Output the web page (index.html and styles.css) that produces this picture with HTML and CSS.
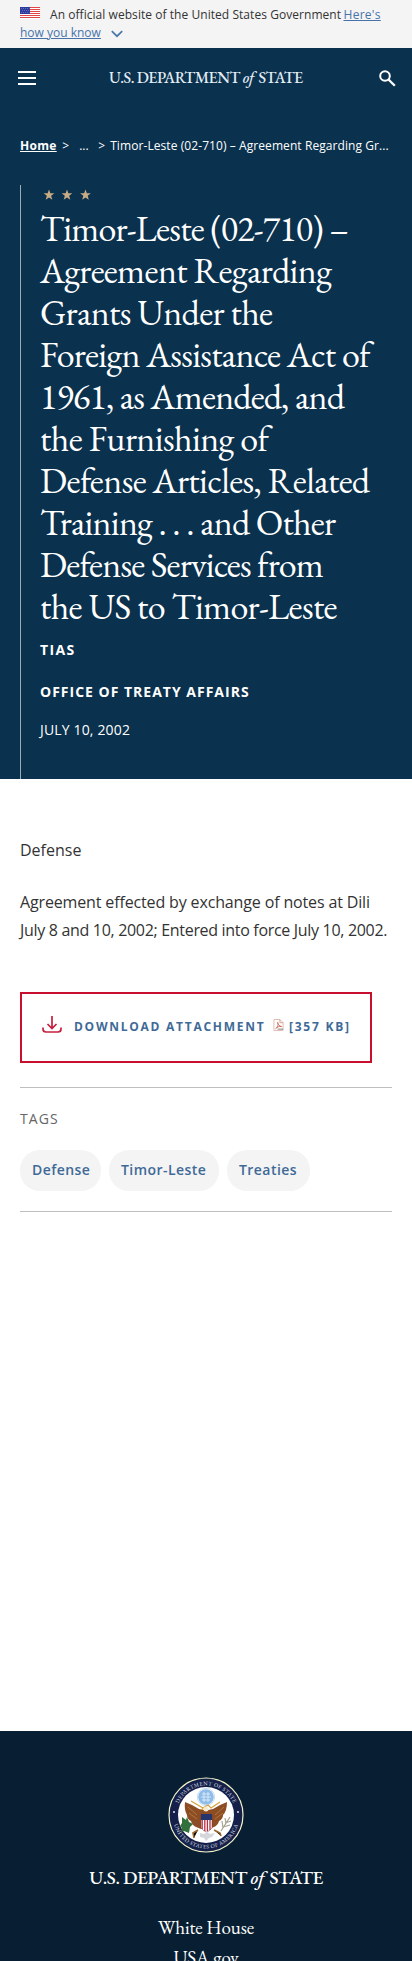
FILE: index.html
```html
<!DOCTYPE html>
<html lang="en">
<head>
<meta charset="utf-8">
<meta name="viewport" content="width=device-width">
<title>Timor-Leste (02-710) - United States Department of State</title>
<link rel="stylesheet" href="styles.css">
</head>
<body>
<div class="gov-banner">
  <div class="gov-line">
    <svg class="flag" viewBox="0 0 20 12"><path fill="#fff" d="M0 0h20v12H0z"/><path stroke="#e0454a" stroke-width="1" d="M0 .5h20M0 2.500h20M0 4.500h20M0 6.500h20M0 8.500h20M0 10.500h20"/><path fill="#2f3b9c" d="M0 0h10v7H0z"/><path stroke="#8f97d6" stroke-width=".7" stroke-dasharray=".8 1.2" d="M1 1.500h8.500M2 3.500h7M1 5.500h8.500"/></svg>
    <span class="gov-text">An official website of the United States Government</span>
    <a class="gov-link here">Here's</a>
  </div>
  <div class="gov-line">
    <a class="gov-link how">how you know</a>
    <svg class="chevron" viewBox="0 0 12 8"><path d="M.8 1.200 6 6.200l5.200-5" fill="none" stroke="#4a77a8" stroke-width="1.700"/></svg>
  </div>
</div>
<header class="site-header">
  <nav class="topbar">
    <span class="menu"><i></i><i></i><i></i></span>
    <span class="brand">U.S. DEPARTMENT <em>of</em> STATE</span>
    <svg class="search" viewBox="0 0 17 17"><circle cx="6" cy="6" r="4.800" fill="none" stroke="#fff" stroke-width="2"/><path d="m9.500 9.500 6.300 6.300" stroke="#fff" stroke-width="2.300"/></svg>
  </nav>
  <div class="crumbs">
    <a class="home">Home</a><span class="sep">&gt;</span><span class="dots">...</span><span class="sep2">&gt;</span><span class="current">Timor-Leste (02-710) – Agreement Regarding Gr...</span>
  </div>
  <div class="hero">
    <svg class="stars" viewBox="0 0 50 12"><defs><path id="star" d="m0-5.500 1.350 3.800 4 .06-3.200 2.450 1.150 3.900L0 2.400l-3.300 2.310 1.150-3.900-3.200-2.450 4-.06z"/></defs><g fill="#c9ab85"><use href="#star" x="6" y="6"/><use href="#star" x="24" y="6"/><use href="#star" x="42.500" y="6"/></g></svg>
    <h1 class="title">
      <span class="t1">Timor-Leste (02-710) –</span>
      <span class="t2">Agreement Regarding</span>
      <span class="t3">Grants Under the</span>
      <span class="t4">Foreign Assistance Act of</span>
      <span class="t5">1961, as Amended, and</span>
      <span class="t6">the Furnishing of</span>
      <span class="t7">Defense Articles, Related</span>
      <span class="t8">Training . . . and Other</span>
      <span class="t9">Defense Services from</span>
      <span class="t10">the US to Timor-Leste</span>
    </h1>
    <p class="meta kind">TIAS</p>
    <p class="meta office">OFFICE OF TREATY AFFAIRS</p>
    <p class="meta date">JULY 10, 2002</p>
  </div>
</header>
<main class="content">
  <p class="para">Defense</p>
  <p class="para second"><span class="l1">Agreement effected by exchange of notes at Dili</span><br><span class="l2">July 8 and 10, 2002; Entered into force July 10, 2002.</span></p>
  <a class="download">
    <svg class="dl-icon" viewBox="0 0 20 17"><path d="M10 0v12M5.500 8 10 12.500 14.500 8M1 11.500V13q0 3 3 3h12q3 0 3-3v-1.500" fill="none" stroke="#c5203e" stroke-width="1.700"/></svg>
    <span class="dl-text">DOWNLOAD ATTACHMENT</span>
    <svg class="pdf" viewBox="0 0 12 13"><path d="M1 .5h6.500L11 4v8.500H1z" fill="#fff" stroke="#e0b8b0"/><path d="M7.500.5V4H11" fill="none" stroke="#d89a8c"/><path d="M3 10.500C6 8 6 5 5 3.500 4.500 6 8 8 9.500 8.200 7 7.500 4 9 3 10.500z" fill="none" stroke="#c4654f" stroke-width=".9"/><path d="M5 11h6" stroke="#777" stroke-width="1"/></svg>
    <span class="dl-size">[357 KB]</span>
  </a>
  <section class="tags">
    <h2 class="tags-title">TAGS</h2>
    <div class="pills">
      <a class="pill p1">Defense</a>
      <a class="pill p2">Timor-Leste</a>
      <a class="pill p3">Treaties</a>
    </div>
  </section>
</main>
<footer class="footer">
  <svg class="seal" viewBox="-38 -38 76 76">
    <defs><path id="arc-top" d="M-29.700 0a29.700 29.700 0 0 1 59.400 0"/><path id="arc-bottom" d="M-33.500 0a33.500 33.500 0 0 0 67 0"/></defs>
    <circle r="37" fill="#14204a" stroke="#f3f3c8" stroke-width="1.200"/>
    <circle r="28" fill="#fff"/>
    <g class="seal-text"><text><textPath href="#arc-top" startOffset="50%">DEPARTMENT OF STATE</textPath></text><text><textPath href="#arc-bottom" startOffset="50%">UNITED STATES OF AMERICA</textPath></text></g>
    <circle cx="-32" cy="-3" r=".9" fill="#fff"/><circle cx="32" cy="-3" r=".9" fill="#fff"/>
    <circle cy="-18" r="7.800" fill="#8fbce8"/><circle cy="-18" r="8.600" fill="none" stroke="#b9d4ee" stroke-width=".8"/><path d="M-4-21h8M-5-18H5M-4-15h8M-2-23v10M2-23v10" stroke="#e6f1fb" stroke-width=".8"/>
    <path fill="#8d4d24" d="M-21-13q8 3 14 7l5 1h4l5-1q6-4 14-7 0 9-4 13 0 4-4 6-1 4-5 6l-5 2H-5l-5-2q-4-2-5-6-4-2-4-6-3-5-2-13z"/>
    <path stroke="#b9803f" stroke-width=".8" fill="none" d="m-18-8 9 8m-8-2 8 6M18-8 9 0m8-2-8 6"/>
    <path stroke="#d3a342" stroke-width="1.300" fill="none" d="M-15-14-3-7l5-3 3 3 9-6"/><circle cy="-6" r="2.500" fill="#f3ead0"/><path fill="#d8a536" d="m-3-7-3 1.500 3 .5z"/>
    <path fill="#fff" stroke="#7a2834" stroke-width=".5" d="M-5 0H6v13q-2 3-5.500 4Q-3 16-5 13z"/><path stroke="#b82e42" stroke-width="1.300" d="M-3.800 5v9M-1.200 5v11M1.400 5v11M4 5v10"/><path fill="#25366e" d="M-5-1H6v6H-5z"/>
    <path stroke="#9a672d" stroke-width="1.600" d="m-8 15-5 3 1 5M8 15l6 3 1 3"/>
    <path fill="#32713c" d="M-24 2l4 3 1-3 2 5 4 2-3 3-1 6-5-2-3 1 1-4-2-2 2-3z"/>
    <path stroke="#a5a393" stroke-width="1.200" fill="none" d="m15 16 9-14m-7 10 7-2m-5-2 6-2m-8 7-1-7m4 2-1-5"/>
    <path fill="#d6d7dc" d="m-6 18 4 1 3-2 3 2 5-1-3 4-3 1-3 3-2-3-4-1z"/>
  </svg>
  <div class="footer-brand">U.S. DEPARTMENT <em>of</em> STATE</div>
  <a class="footer-link">White House</a>
  <a class="footer-link">USA.gov</a>
</footer>
</body>
</html>
```
FILE: styles.css
```css
* { box-sizing: border-box; }
body { margin: 0; width: 412px; height: 1961px; overflow: hidden; background: #fff; color: #333; font-family: "Open Sans", "Noto Sans", sans-serif; }
p, h1, h2 { margin: 0; }
svg { display: block; flex: none; }
.gov-banner { height: 48px; padding: 6px 20px 0; background: #f4f4f4; font-size: 12px; line-height: 18px; }
.gov-line { display: flex; height: 18px; white-space: nowrap; }
.flag { width: 20px; height: 12px; margin: 1px 10px 0 0; }
.gov-text { width: 293.5px; letter-spacing: .05px; }
.gov-link { color: #4773aa; text-decoration: underline; }
.here { letter-spacing: .28px; }
.chevron { width: 12px; height: 8px; margin: 6px 0 0 10px; }
.site-header { height: 731px; background: #0a314d; color: #fff; }
.topbar { display: flex; height: 60px; align-items: flex-start; white-space: nowrap; }
.menu { display: flex; flex-direction: column; gap: 4px; width: 18px; margin: 23px 0 0 18px; }
.menu i { height: 2px; background: #fff; }
.brand { width: 194px; margin: 20px 0 0 73px; font: 500 16px/20px "EB Garamond", "Liberation Serif", serif; letter-spacing: -.53px; color: #e3edf5; }
.brand em, .footer-brand em { font-weight: 500; margin-right: 2px; }
.search { width: 17px; height: 17px; margin: 22px 0 0 76px; }
.crumbs { display: flex; height: 20px; margin-top: 28px; padding-left: 20px; font-size: 12px; line-height: 20px; white-space: nowrap; }
.home { font-weight: 700; text-decoration: underline; letter-spacing: .3px; margin-right: 5.5px; }
.sep { width: 17px; }
.dots { width: 19px; }
.sep2 { width: 12px; }
.current { letter-spacing: .078px; }
.hero { height: 594px; margin: 29px 20px 0; padding-left: 19px; border-left: 1px solid #9cacb5; }
.stars { width: 50px; height: 12px; margin: 0 0 0 3px; position: relative; top: 4px; }
.title { font: 400 36px/42px "EB Garamond", "Liberation Serif", serif; margin-top: 11px; }
.title span { display: block; white-space: nowrap; }
.t1 { letter-spacing: -.8px; }
.t2 { letter-spacing: -.64px; }
.t3 { letter-spacing: -.64px; }
.t4 { letter-spacing: -.72px; }
.t5 { letter-spacing: -.8px; }
.t6 { letter-spacing: -.6px; }
.t7 { letter-spacing: -.63px; }
.t8 { letter-spacing: -.78px; }
.t9 { letter-spacing: -.87px; }
.t10 { letter-spacing: -.65px; }
.meta { height: 20px; font-size: 14px; line-height: 20px; white-space: nowrap; font-weight: 700; }
.kind { margin-top: 12px; letter-spacing: 1.4px; }
.office { margin-top: 22px; letter-spacing: 1px; }
.date { margin-top: 18px; font-weight: 400; letter-spacing: .16px; }
.content { height: 952px; padding: 57px 20px 0; }
.para { font-size: 16px; line-height: 28px; white-space: nowrap; }
.second { margin-top: 24px; }
.l1 { letter-spacing: -.145px; }
.l2 { letter-spacing: -.313px; }
.download { display: flex; width: 352px; height: 71px; margin-top: 48px; padding-left: 20px; border: 2px solid #c8102e; color: #3f6a98; font-size: 12px; font-weight: 700; line-height: 18px; white-space: nowrap; }
.dl-icon { width: 20px; height: 17px; margin: 22px 12px 0 0; }
.dl-text { width: 199px; margin-top: 24px; letter-spacing: 1.74px; }
.pdf { width: 11px; height: 12px; margin: 25px 5px 0 0; }
.dl-size { margin-top: 24px; letter-spacing: 1.75px; }
.tags { height: 125px; margin-top: 24px; padding-top: 21px; border-top: 1px solid #bfbfbf; border-bottom: 1px solid #bfbfbf; }
.tags-title { font-size: 14px; line-height: 20px; font-weight: 500; letter-spacing: 1.1px; color: #666; }
.pills { display: flex; gap: 8px; margin-top: 21px; }
.pill { height: 41px; padding: 10px 0 0 12px; border-radius: 20px; background: #f4f4f4; color: #3f6a98; font-size: 14px; font-weight: 600; line-height: 20px; letter-spacing: .45px; white-space: nowrap; }
.p1 { width: 81px; }
.p2 { width: 110px; }
.p3 { width: 83px; }
.footer { height: 230px; padding-top: 46px; display: flex; flex-direction: column; align-items: center; background: #081f33; color: #fff; font-family: "EB Garamond", "Liberation Serif", serif; white-space: nowrap; }
.seal { width: 76px; height: 76px; }
.seal-text { fill: #e4e6f2; font-size: 5.5px; text-anchor: middle; letter-spacing: .4px; }
.footer-brand { margin-top: 12px; font-size: 19px; font-weight: 500; line-height: 26px; letter-spacing: -.46px; }
.footer-link { margin-top: 25px; font-size: 19px; line-height: 24px; letter-spacing: -.14px; }
.footer-link + .footer-link { margin-top: 6px; }
```
